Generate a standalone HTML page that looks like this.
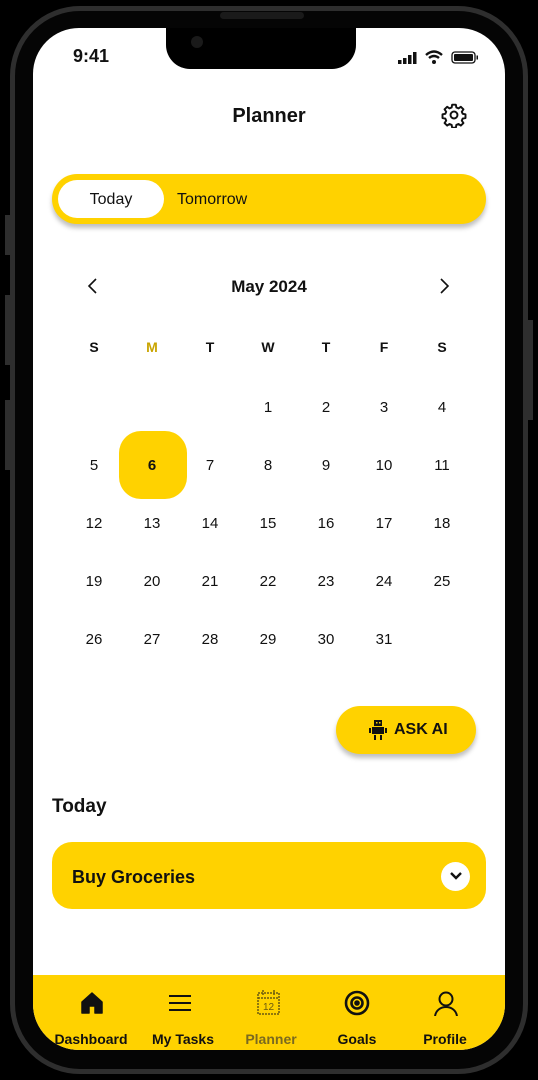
<!DOCTYPE html>
<html><head><style>
*{margin:0;padding:0;box-sizing:border-box}
body{width:538px;height:1080px;background:#000;position:relative;overflow:hidden;font-family:"Liberation Sans",sans-serif;color:#111}
.frame{position:absolute;left:10px;top:6px;width:518px;height:1068px;border-radius:70px;border:5px solid #2e2e2e;background:#050505}
.screen{position:absolute;left:33px;top:28px;width:472px;height:1022px;border-radius:46px;background:#fff;overflow:hidden}
.notch{position:absolute;left:166px;top:28px;width:190px;height:41px;background:#000;border-radius:0 0 24px 24px}
.speaker{position:absolute;left:220px;top:12px;width:84px;height:7px;border-radius:4px;background:#1a1a1a}
.abs{position:absolute}
.yellow{background:#FFD200}
.cal div{position:absolute;width:40px;text-align:center;font-size:15px;transform:translateX(-50%)}
.nav{position:absolute;left:0;top:947px;width:472px;height:75px;background:#FFD200}
.nav .lbl{position:absolute;top:56px;font-size:14px;font-weight:bold;transform:translateX(-50%);white-space:nowrap}
</style></head><body>
<div class="frame"></div>
<div class="speaker"></div>
<div class="screen">
 <div class="abs" style="left:40px;top:18px;font-size:18px;font-weight:bold">9:41</div>
 <svg class="abs" style="left:365px;top:24px" width="22" height="12"><rect x="0" y="8" width="3.5" height="4" fill="#111"/><rect x="5" y="6" width="3.5" height="6" fill="#111"/><rect x="10" y="3" width="3.5" height="9" fill="#111"/><rect x="15" y="0" width="3.5" height="12" fill="#111"/></svg>
 <svg class="abs" style="left:392px;top:22px" width="18" height="14"><path d="M1 5 Q9 -2 17 5" stroke="#111" stroke-width="2.4" fill="none"/><path d="M4 8 Q9 4 14 8" stroke="#111" stroke-width="2.4" fill="none"/><circle cx="9" cy="12" r="2" fill="#111"/></svg>
 <svg class="abs" style="left:418px;top:23px" width="28" height="13"><rect x="1" y="1" width="23" height="11" rx="3" stroke="#111" stroke-width="1.3" fill="none"/><rect x="3" y="3" width="19" height="7" rx="1" fill="#111"/><rect x="25.5" y="4.5" width="1.5" height="4" fill="#111"/></svg>
 <div class="abs" style="left:0;width:472px;top:77px;text-align:center;font-size:20px;font-weight:bold">Planner</div>
 <svg class="abs" style="left:408px;top:74px" width="26" height="26" viewBox="0 0 24 24" fill="none" stroke="#111" stroke-width="1.8"><circle cx="12" cy="12" r="3.2"/><path d="M10.3 2.5h3.4l.5 2.6 1.9.8 2.2-1.5 2.4 2.4-1.5 2.2.8 1.9 2.6.5v3.4l-2.6.5-.8 1.9 1.5 2.2-2.4 2.4-2.2-1.5-1.9.8-.5 2.6h-3.4l-.5-2.6-1.9-.8-2.2 1.5-2.4-2.4 1.5-2.2-.8-1.9-2.6-.5v-3.4l2.6-.5.8-1.9-1.5-2.2 2.4-2.4 2.2 1.5 1.9-.8z" stroke-linejoin="round"/></svg>
 <div class="abs yellow" style="left:19px;top:146px;width:434px;height:50px;border-radius:25px;box-shadow:0 4px 5px rgba(0,0,0,.25)"></div>
 <div class="abs" style="left:25px;top:152px;width:106px;height:38px;border-radius:19px;background:#fff;text-align:center;line-height:40px;font-size:16px">Today</div>
 <div class="abs" style="left:144px;top:163px;font-size:16px">Tomorrow</div>
 <svg class="abs" style="left:54px;top:250px" width="12" height="16"><path d="M9 1L2 8l7 7" stroke="#111" stroke-width="1.6" fill="none"/></svg>
 <svg class="abs" style="left:405px;top:250px" width="12" height="16"><path d="M3 1l7 7-7 7" stroke="#111" stroke-width="1.6" fill="none"/></svg>
 <div class="abs" style="left:0;width:472px;top:249px;text-align:center;font-size:17px;font-weight:bold">May 2024</div>
 <div class="abs yellow" style="left:86px;top:403px;width:68px;height:68px;border-radius:22px"></div>
 <div class="cal">
  <div style="left:61px;top:311px;font-weight:bold;font-size:14px">S</div>
  <div style="left:119px;top:311px;font-weight:bold;font-size:14px;color:#C9A400">M</div>
  <div style="left:177px;top:311px;font-weight:bold;font-size:14px">T</div>
  <div style="left:235px;top:311px;font-weight:bold;font-size:14px">W</div>
  <div style="left:293px;top:311px;font-weight:bold;font-size:14px">T</div>
  <div style="left:351px;top:311px;font-weight:bold;font-size:14px">F</div>
  <div style="left:409px;top:311px;font-weight:bold;font-size:14px">S</div>
  <div style="left:235px;top:371px">1</div><div style="left:293px;top:371px">2</div><div style="left:351px;top:371px">3</div><div style="left:409px;top:371px">4</div>
  <div style="left:61px;top:429px">5</div><div style="left:119px;top:429px;font-weight:bold">6</div><div style="left:177px;top:429px">7</div><div style="left:235px;top:429px">8</div><div style="left:293px;top:429px">9</div><div style="left:351px;top:429px">10</div><div style="left:409px;top:429px">11</div>
  <div style="left:61px;top:487px">12</div><div style="left:119px;top:487px">13</div><div style="left:177px;top:487px">14</div><div style="left:235px;top:487px">15</div><div style="left:293px;top:487px">16</div><div style="left:351px;top:487px">17</div><div style="left:409px;top:487px">18</div>
  <div style="left:61px;top:545px">19</div><div style="left:119px;top:545px">20</div><div style="left:177px;top:545px">21</div><div style="left:235px;top:545px">22</div><div style="left:293px;top:545px">23</div><div style="left:351px;top:545px">24</div><div style="left:409px;top:545px">25</div>
  <div style="left:61px;top:603px">26</div><div style="left:119px;top:603px">27</div><div style="left:177px;top:603px">28</div><div style="left:235px;top:603px">29</div><div style="left:293px;top:603px">30</div><div style="left:351px;top:603px">31</div>
 </div>
 <div class="abs yellow" style="left:303px;top:678px;width:140px;height:48px;border-radius:24px;box-shadow:0 4px 5px rgba(0,0,0,.25)"></div>
 <svg class="abs" style="left:336px;top:692px" width="18" height="20" viewBox="0 0 18 20" fill="#111"><rect x="5" y="0" width="8" height="6"/><rect x="3" y="7" width="12" height="7"/><rect x="0" y="8" width="2" height="5"/><rect x="16" y="8" width="2" height="5"/><rect x="5" y="15" width="2" height="5"/><rect x="11" y="15" width="2" height="5"/><rect x="7" y="2" width="1.5" height="1.5" fill="#FFD200"/><rect x="10" y="2" width="1.5" height="1.5" fill="#FFD200"/></svg>
 <div class="abs" style="left:361px;top:693px;font-size:16px;font-weight:bold">ASK AI</div>
 <div class="abs" style="left:19px;top:768px;font-size:19px;font-weight:bold">Today</div>
 <div class="abs yellow" style="left:19px;top:814px;width:434px;height:67px;border-radius:20px"></div>
 <div class="abs" style="left:39px;top:839px;font-size:18px;font-weight:bold">Buy Groceries</div>
 <div class="abs" style="left:408px;top:834px;width:29px;height:29px;border-radius:50%;background:#fff"></div>
 <svg class="abs" style="left:415px;top:842px" width="16" height="12"><path d="M3 3l5 5 5-5" stroke="#111" stroke-width="2.4" fill="none"/></svg>
 <div class="nav">
  <svg class="abs" style="left:47px;top:16px" width="24" height="24" viewBox="0 0 24 24"><path d="M2 11L12 2l10 9v11h-7v-7h-6v7H2z" fill="#111" stroke="#111" stroke-linejoin="round" stroke-width="1.5"/></svg>
  <svg class="abs" style="left:135px;top:19px" width="24" height="18"><path d="M1 2h22M1 9h22M1 16h22" stroke="#111" stroke-width="2"/></svg>
  <svg class="abs" style="left:224px;top:15px" width="23" height="25" viewBox="0 0 23 25" fill="none" stroke="#6b5a10" stroke-width="1.5" stroke-dasharray="2 1"><rect x="1" y="3" width="21" height="21"/><path d="M1 8h21M6 0v5M17 0v5"/><text x="11.5" y="20" font-size="10" text-anchor="middle" fill="#6b5a10" stroke="none" font-family="Liberation Sans">12</text></svg>
  <svg class="abs" style="left:311px;top:15px" width="26" height="26" viewBox="0 0 26 26" fill="none" stroke="#111" stroke-width="2.6"><circle cx="13" cy="13" r="11"/><circle cx="13" cy="13" r="5.5"/><circle cx="13" cy="13" r="1.5" fill="#111"/></svg>
  <svg class="abs" style="left:400px;top:15px" width="26" height="26" viewBox="0 0 26 26" fill="none" stroke="#111" stroke-width="2"><circle cx="13" cy="9" r="6.5"/><path d="M2 26c1-6 6-9 11-9s10 3 11 9"/></svg>
  <div class="lbl" style="left:58px">Dashboard</div>
  <div class="lbl" style="left:150px">My Tasks</div>
  <div class="lbl" style="left:238px;color:#7a6a20">Planner</div>
  <div class="lbl" style="left:324px">Goals</div>
  <div class="lbl" style="left:412px">Profile</div>
 </div>
</div>
<div class="notch"></div>
<div class="abs" style="left:191px;top:36px;width:12px;height:12px;border-radius:50%;background:#1a1a1a"></div>
<div class="abs" style="left:5px;top:215px;width:5px;height:40px;background:#2e2e2e"></div>
<div class="abs" style="left:5px;top:295px;width:5px;height:70px;background:#2e2e2e"></div>
<div class="abs" style="left:5px;top:400px;width:5px;height:70px;background:#2e2e2e"></div>
<div class="abs" style="left:528px;top:320px;width:5px;height:100px;background:#2e2e2e"></div>
</body></html>
